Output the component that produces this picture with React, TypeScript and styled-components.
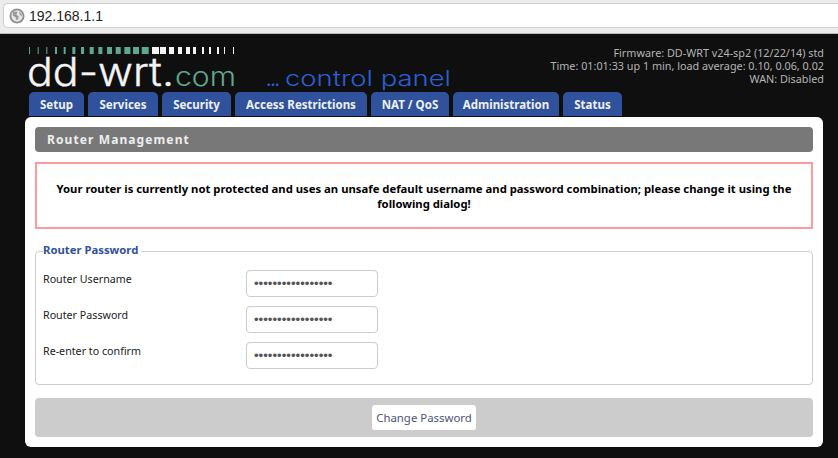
import React from 'react';
import styled, { createGlobalStyle } from 'styled-components';

const GlobalStyle = createGlobalStyle`
  html, body {
    margin: 0;
    padding: 0;
    background: #0f0f0f;
  }
  * {
    box-sizing: border-box;
  }
`;

const Page = styled.div`
  width: 838px;
  height: 458px;
  overflow: hidden;
  background: #0f0f0f;
  font-family: "Noto Sans", "Liberation Sans", sans-serif;
`;

const BrowserBar = styled.div`
  height: 34px;
  padding: 3px 0 5px 3px;
  background: #ececec;
  border-bottom: 1px solid #bdbdbd;
`;

const AddressBox = styled.div`
  display: flex;
  align-items: center;
  gap: 4px;
  height: 25px;
  padding-left: 5px;
  background: #fff;
  border: 1px solid #cfcfcf;
  border-right: none;
  border-radius: 5px 0 0 5px;
  font-family: "Liberation Sans", sans-serif;
  font-size: 14px;
  color: #222;
`;

const Header = styled.div`
  display: flex;
  justify-content: space-between;
  height: 58px;
  padding: 8px 14px 0 27px;
`;

const LogoArt = styled.svg`
  overflow: visible;
`;

const Status = styled.div`
  padding-top: 4px;
  font-size: 10.8px;
  line-height: 13px;
  text-align: right;
  color: #b4b4b4;
`;

const Tabs = styled.div`
  display: flex;
  gap: 4px;
  height: 25px;
  padding-left: 29px;
`;

const Tab = styled.div<{ $width: number }>`
  width: ${p => p.$width}px;
  height: 24px;
  display: flex;
  align-items: center;
  justify-content: center;
  background: #30529c;
  border-radius: 5px 5px 0 0;
  font-size: 11.5px;
  font-weight: 700;
  color: #eef1f6;
`;

const Panel = styled.div`
  display: flex;
  flex-direction: column;
  width: 798px;
  height: 330px;
  margin-left: 25px;
  padding: 10px;
  background: #fff;
  border-radius: 6px;
`;

const Heading = styled.div`
  height: 25px;
  padding-left: 12px;
  background: #787878;
  border-radius: 4px;
  font-size: 12px;
  font-weight: 700;
  line-height: 25px;
  letter-spacing: 1.1px;
  color: #eee;
`;

const Warning = styled.div`
  display: flex;
  align-items: center;
  justify-content: center;
  height: 67px;
  margin-top: 10px;
  padding: 0 15px;
  border: 2px solid #ff9a9a;
  font-size: 11.3px;
  font-weight: 700;
  line-height: 15px;
  text-align: center;
  color: #000;
`;

const Group = styled.fieldset`
  height: 142px;
  margin: 14px 0 0;
  padding: 11px 7px 0;
  border: 1px solid #ccc;
  border-radius: 4px;
`;

const Legend = styled.legend`
  padding: 0 3px 2px 0;
  font-size: 11.3px;
  font-weight: 700;
  line-height: 14px;
  color: #30529c;
`;

const Row = styled.div`
  display: flex;
  height: 27px;
  margin-bottom: 9px;
`;

const Label = styled.label`
  width: 203px;
  padding-top: 2px;
  font-size: 10.7px;
  line-height: 15px;
  color: #222;
`;

const Field = styled.input`
  width: 132px;
  height: 27px;
  padding: 0 7px;
  background: #fff;
  border: 1px solid #ccc;
  border-radius: 4px;
  font-family: "Liberation Sans", sans-serif;
  font-size: 13.2px;
  color: #555;
  outline: none;
`;

const Footer = styled.div`
  display: flex;
  align-items: center;
  justify-content: center;
  height: 39px;
  margin-top: 13px;
  background: #ccc;
  border-radius: 4px;
`;

const Submit = styled.button`
  width: 104px;
  height: 25px;
  padding: 0;
  background: #fff;
  border: none;
  border-radius: 3px;
  font-family: "Noto Sans", sans-serif;
  font-size: 11.4px;
  color: #4a5578;
`;

const greenBars = [1, 1, 1, 2, 2, 3, 3, 4, 4, 5, 5, 6, 6, 7];
const whiteBars: [number, number][] = [
  [125, 7], [133, 6], [142, 5], [151, 4], [159, 4], [166, 3], [175, 2], [182, 2], [190, 2], [197, 1], [206, 1],
];

const Logo = () => (
  <LogoArt width="430" height="50" viewBox="0 0 430 50">
    {greenBars.map((w, i) => <rect key={i} x={2 + i * 8.67} y="5" width={w} height="7" fill="#5fa890" />)}
    {whiteBars.map(([x, w]) => <rect key={x} x={x} y="5" width={w} height="7" fill="#f4f4f4" />)}
    <text x="0" y="44" fontFamily="Inter, sans-serif" fontWeight="300" fontSize="39" fill="#f4f4f4" stroke="#f4f4f4" strokeWidth="0.4" textLength="147" lengthAdjust="spacingAndGlyphs">dd-wrt.</text>
    <text x="148" y="44" fontFamily="Inter, sans-serif" fontWeight="300" fontSize="26" fill="#5fa890" textLength="61" lengthAdjust="spacingAndGlyphs">com</text>
    <text x="239" y="44" fontFamily="Inter, sans-serif" fontWeight="400" fontSize="19" fill="#2a5fd8" textLength="14" lengthAdjust="spacing">...</text>
    <text x="258" y="44" fontFamily="Inter, sans-serif" fontWeight="300" fontSize="21" fill="#2a5fd8" textLength="166" lengthAdjust="spacingAndGlyphs">control panel</text>
  </LogoArt>
);

const GlobeIcon = () => (
  <svg width="16" height="16" viewBox="0 0 16 16">
    <circle cx="8" cy="8" r="7.5" fill="#8f8f8f" />
    <circle cx="8" cy="8" r="5.7" fill="#e6e6e6" />
    <path d="M4 4.2l3.2-1 1.2 1.6-1.2 2 2.6 1.4-.8 3.4-1.4.6-1-3-2.8-1.6zM10 3.4l2.6 2.4.4 2.6-2-1.4z" fill="#9a9a9a" />
  </svg>
);

const tabs: [string, number][] = [
  ['Setup', 55], ['Services', 70], ['Security', 69], ['Access Restrictions', 132],
  ['NAT / QoS', 78], ['Administration', 106], ['Status', 59],
];

const fields = ['Router Username', 'Router Password', 'Re-enter to confirm'];

const App: React.FC = () => {
  return (
    <Page>
      <GlobalStyle />
      <BrowserBar>
        <AddressBox>
          <GlobeIcon />
          192.168.1.1
        </AddressBox>
      </BrowserBar>
      <Header>
        <Logo />
        <Status>
          <div>Firmware: DD-WRT v24-sp2 (12/22/14) std</div>
          <div>Time: 01:01:33 up 1 min, load average: 0.10, 0.06, 0.02</div>
          <div>WAN: Disabled</div>
        </Status>
      </Header>
      <Tabs>
        {tabs.map(([name, width]) => (
          <Tab key={name} $width={width}>{name}</Tab>
        ))}
      </Tabs>
      <Panel>
        <Heading>Router Management</Heading>
        <Warning>
          Your router is currently not protected and uses an unsafe default username and password combination; please change it using the following dialog!
        </Warning>
        <Group>
          <Legend>Router Password</Legend>
          {fields.map(x => (
            <Row key={x}>
              <Label>{x}</Label>
              <Field type="password" defaultValue="aaaaaaaaaaaaaaaaa" readOnly />
            </Row>
          ))}
        </Group>
        <Footer>
          <Submit>Change Password</Submit>
        </Footer>
      </Panel>
    </Page>
  );
};

export default App;
